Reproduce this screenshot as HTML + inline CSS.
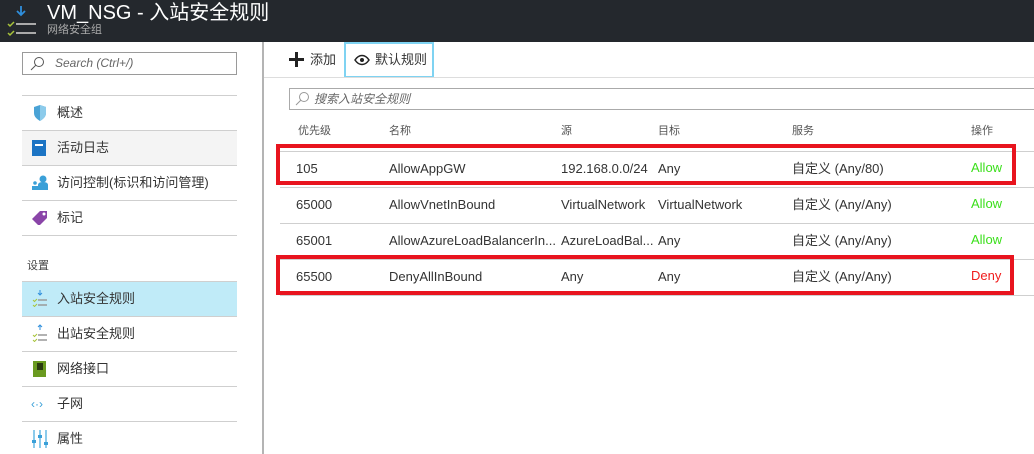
<!DOCTYPE html>
<html><head><meta charset="utf-8"><style>
*{margin:0;padding:0;box-sizing:border-box}
body{width:1034px;height:454px;overflow:hidden;background:#fff;font-family:"Liberation Sans","Noto Sans CJK SC",sans-serif;color:#333;position:relative}
.a{position:absolute;white-space:nowrap;line-height:16px}
.hl{position:absolute;height:1px;background:#cfcfcf}
.t{font-size:13px;color:#333}
.h{font-size:11px;color:#555}
</style></head><body>
<div class="a" style="left:0;top:0;width:1034px;height:42px;background:#24282d"></div>
<svg class="a" style="left:5px;top:3px" width="34" height="34" viewBox="0 0 34 34">
<path d="M16 3v9M12 8l4 4 4-4" stroke="#2f8fdc" stroke-width="1.8" fill="none"/>
<path d="M3 21l2 2 4-4M3 30l2 2 4-4" stroke="#a8c43a" stroke-width="1.5" fill="none"/>
<path d="M11 21h20M11 30h20" stroke="#aaa" stroke-width="2"/>
</svg>
<div class="a" style="left:47px;top:2px;font-size:20px;line-height:22px;color:#fff">VM_NSG - 入站安全规则</div>
<div class="a" style="left:47px;top:24px;font-size:11px;line-height:13px;color:#aaa">网络安全组</div>

<div class="a" style="left:262px;top:42px;width:2px;height:412px;background:#b4b4b4"></div>

<div class="a" style="left:22px;top:52px;width:215px;height:23px;border:1px solid #9a9a9a"></div>
<svg class="a" style="left:29px;top:56px" width="16" height="16"><circle cx="10" cy="6" r="4.5" stroke="#555" fill="none"/><path d="M7 9l-5 5" stroke="#555"/></svg>
<div class="a" style="left:55px;top:55px;font-size:12px;font-style:italic;color:#666">Search (Ctrl+/)</div>

<div class="hl" style="left:22px;top:95px;width:215px"></div>
<div class="a" style="left:22px;top:131px;width:215px;height:34px;background:#f4f4f4"></div>
<div class="hl" style="left:22px;top:130px;width:215px"></div>
<div class="hl" style="left:22px;top:165px;width:215px"></div>
<div class="hl" style="left:22px;top:200px;width:215px"></div>
<div class="hl" style="left:22px;top:235px;width:215px"></div>
<div class="a" style="left:22px;top:282px;width:215px;height:34px;background:#c0ebf8"></div>
<div class="hl" style="left:22px;top:281px;width:215px"></div>
<div class="hl" style="left:22px;top:316px;width:215px"></div>
<div class="hl" style="left:22px;top:351px;width:215px"></div>
<div class="hl" style="left:22px;top:386px;width:215px"></div>
<div class="hl" style="left:22px;top:421px;width:215px"></div>

<svg class="a" style="left:32px;top:104px" width="16" height="18"><path d="M2 3l6-2 6 2v6c0 4-3 6-6 8-3-2-6-4-6-8z" fill="#4aa3d6"/><path d="M8 1l6 2v6c0 4-3 6-6 8z" fill="#8ccbeb"/></svg>
<div class="a" style="left:32px;top:140px;width:14px;height:16px;background:#1c74c4"></div><div class="a" style="left:35px;top:144px;width:8px;height:2px;background:#fff;line-height:0"></div>
<svg class="a" style="left:31px;top:175px" width="18" height="16"><circle cx="12" cy="4" r="3.5" fill="#3aa0d8"/><path d="M7 15v-5c0-2 2-3 5-3s5 1 5 3v5z" fill="#3aa0d8"/><circle cx="4" cy="8" r="1.8" fill="#3aa0d8"/><rect x="1" y="11" width="6" height="4" fill="#3aa0d8"/></svg>
<svg class="a" style="left:31px;top:209px" width="18" height="16"><path d="M1 10l8-8h7v7l-8 8z" fill="#8a45a8"/><circle cx="13" cy="5" r="1.5" fill="#fff"/></svg>
<svg class="a" style="left:32px;top:289px" width="16" height="18"><path d="M8 1v5M6 4l2 2 2-2" stroke="#2f8fdc" fill="none"/><path d="M1 11l1.5 1.5 2.5-2.5M1 16l1.5 1.5 2.5-2.5" stroke="#a8c43a" fill="none"/><path d="M6 11h9M6 16h9" stroke="#999" stroke-width="1.5"/></svg>
<svg class="a" style="left:32px;top:324px" width="16" height="18"><path d="M8 6v-5M6 3l2-2 2 2" stroke="#2f8fdc" fill="none"/><path d="M1 11l1.5 1.5 2.5-2.5M1 16l1.5 1.5 2.5-2.5" stroke="#a8c43a" fill="none"/><path d="M6 11h9M6 16h9" stroke="#999" stroke-width="1.5"/></svg>
<div class="a" style="left:33px;top:361px;width:13px;height:16px;background:#6a9a20"></div><div class="a" style="left:37px;top:363px;width:6px;height:7px;background:#2a3a10"></div>
<div class="a" style="left:31px;top:396px;font-size:12px;color:#3aa0d8">‹·›</div>
<svg class="a" style="left:32px;top:430px" width="16" height="18"><rect x="1" y="0" width="2" height="18" fill="#8ccbeb"/><rect x="7" y="0" width="2" height="18" fill="#8ccbeb"/><rect x="13" y="0" width="2" height="18" fill="#8ccbeb"/><rect x="0" y="10" width="4" height="3" fill="#3aa0d8"/><rect x="6" y="5" width="4" height="3" fill="#3aa0d8"/><rect x="12" y="12" width="4" height="3" fill="#3aa0d8"/></svg>

<div class="a t" style="left:57px;top:105px">概述</div>
<div class="a t" style="left:57px;top:140px">活动日志</div>
<div class="a t" style="left:57px;top:175px">访问控制(标识和访问管理)</div>
<div class="a t" style="left:57px;top:210px">标记</div>
<div class="a" style="left:27px;top:258px;font-size:11px;color:#444">设置</div>
<div class="a t" style="left:57px;top:291px">入站安全规则</div>
<div class="a t" style="left:57px;top:326px">出站安全规则</div>
<div class="a t" style="left:57px;top:361px">网络接口</div>
<div class="a t" style="left:57px;top:396px">子网</div>
<div class="a t" style="left:57px;top:431px">属性</div>

<div class="a" style="left:289px;top:58px;width:15px;height:3px;background:#222"></div>
<div class="a" style="left:295px;top:52px;width:3px;height:15px;background:#222"></div>
<div class="a t" style="left:310px;top:52px">添加</div>
<div class="a" style="left:344px;top:42px;width:90px;height:36px;border:2px solid #7fd3f2"></div>
<svg class="a" style="left:354px;top:54px" width="16" height="12"><path d="M1 6c4-6 10-6 14 0-4 6-10 6-14 0z" stroke="#222" stroke-width="1.5" fill="none"/><circle cx="8" cy="6" r="2" fill="#222"/></svg>
<div class="a t" style="left:375px;top:52px">默认规则</div>
<div class="hl" style="left:264px;top:77px;width:770px;background:#ddd"></div>

<div class="a" style="left:289px;top:88px;width:750px;height:22px;border:1px solid #aaa"></div>
<svg class="a" style="left:294px;top:91px" width="16" height="16"><circle cx="10" cy="6" r="4.5" stroke="#999" fill="none"/><path d="M7 9l-5 5" stroke="#999"/></svg>
<div class="a" style="left:314px;top:91px;font-size:12px;font-style:italic;color:#666">搜索入站安全规则</div>

<div class="a h" style="left:298px;top:123px">优先级</div>
<div class="a h" style="left:389px;top:123px">名称</div>
<div class="a h" style="left:561px;top:123px">源</div>
<div class="a h" style="left:658px;top:123px">目标</div>
<div class="a h" style="left:792px;top:123px">服务</div>
<div class="a h" style="left:971px;top:123px">操作</div>

<div class="hl" style="left:280px;top:151px;width:754px"></div>
<div class="hl" style="left:280px;top:187px;width:754px"></div>
<div class="hl" style="left:280px;top:223px;width:754px"></div>
<div class="hl" style="left:280px;top:259px;width:754px"></div>
<div class="hl" style="left:280px;top:295px;width:754px"></div>

<div class="a t" style="left:296px;top:161px">105</div><div class="a t" style="left:389px;top:161px">AllowAppGW</div><div class="a t" style="left:561px;top:161px">192.168.0.0/24</div><div class="a t" style="left:658px;top:161px">Any</div><div class="a t" style="left:792px;top:161px">自定义 (Any/80)</div><div class="a t" style="left:971px;top:160px;color:#3adf1a">Allow</div>
<div class="a t" style="left:296px;top:197px">65000</div><div class="a t" style="left:389px;top:197px">AllowVnetInBound</div><div class="a t" style="left:561px;top:197px">VirtualNetwork</div><div class="a t" style="left:658px;top:197px">VirtualNetwork</div><div class="a t" style="left:792px;top:197px">自定义 (Any/Any)</div><div class="a t" style="left:971px;top:196px;color:#3adf1a">Allow</div>
<div class="a t" style="left:296px;top:233px">65001</div><div class="a t" style="left:389px;top:233px">AllowAzureLoadBalancerIn...</div><div class="a t" style="left:561px;top:233px">AzureLoadBal...</div><div class="a t" style="left:658px;top:233px">Any</div><div class="a t" style="left:792px;top:233px">自定义 (Any/Any)</div><div class="a t" style="left:971px;top:232px;color:#3adf1a">Allow</div>
<div class="a t" style="left:296px;top:269px">65500</div><div class="a t" style="left:389px;top:269px">DenyAllInBound</div><div class="a t" style="left:561px;top:269px">Any</div><div class="a t" style="left:658px;top:269px">Any</div><div class="a t" style="left:792px;top:269px">自定义 (Any/Any)</div><div class="a t" style="left:971px;top:268px;color:#f01c1c">Deny</div>

<div class="a" style="left:276px;top:144px;width:740px;height:41px;border:4px solid #e8141e"></div>
<div class="a" style="left:276px;top:255px;width:738px;height:40px;border:4px solid #e8141e"></div>
</body></html>
